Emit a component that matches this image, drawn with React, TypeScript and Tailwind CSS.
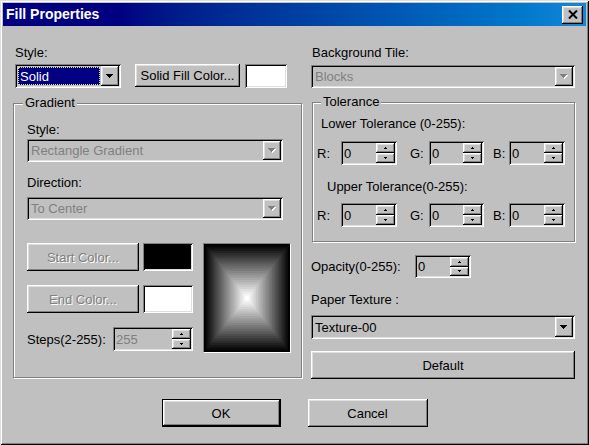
import React from 'react';

// Classic 3D borders
const SUNKEN =
  'shadow-[inset_1px_1px_0_#808080,inset_-1px_-1px_0_#ffffff,inset_2px_2px_0_#000000,inset_-2px_-2px_0_#dfdfdf]';
const RAISED =
  'shadow-[inset_-1px_-1px_0_#000000,inset_1px_1px_0_#ffffff,inset_-2px_-2px_0_#808080,inset_2px_2px_0_#dfdfdf]';
const DISABLED_TEXT = 'text-[#808080] [text-shadow:1px_1px_0_#ffffff]';

const DownArrow = ({ disabled = false }: { disabled?: boolean }) => {
  const rows = (dx: number, dy: number, fill: string) => (
    <g fill={fill}>
      <rect x={0 + dx} y={0 + dy} width="7" height="1" />
      <rect x={1 + dx} y={1 + dy} width="5" height="1" />
      <rect x={2 + dx} y={2 + dy} width="3" height="1" />
      <rect x={3 + dx} y={3 + dy} width="1" height="1" />
    </g>
  );
  return (
    <svg width="8" height="5" viewBox="0 0 8 5" shapeRendering="crispEdges">
      {disabled && rows(1, 1, '#ffffff')}
      {rows(0, 0, disabled ? '#808080' : '#000000')}
    </svg>
  );
};

const TinyArrow = ({ up }: { up?: boolean }) => (
  <svg width="3" height="2" viewBox="0 0 3 2" shapeRendering="crispEdges">
    {up ? (
      <g fill="#000">
        <rect x="1" y="0" width="1" height="1" />
        <rect x="0" y="1" width="3" height="1" />
      </g>
    ) : (
      <g fill="#000">
        <rect x="0" y="0" width="3" height="1" />
        <rect x="1" y="1" width="1" height="1" />
      </g>
    )}
  </svg>
);

interface ComboProps {
  value: string;
  disabled?: boolean;
  selected?: boolean;
  className?: string;
}

const Combo = ({ value, disabled, selected, className = '' }: ComboProps) => (
  <div className={`flex bg-[#c0c0c0] p-[2px] ${SUNKEN} ${className}`}>
    <div className="flex min-w-0 flex-1 items-center">
      {selected ? (
        <span className="m-[1px] flex h-[calc(100%-2px)] flex-1 items-center border border-dotted border-[#e0e080] bg-[#000080] pl-[1px] text-white">
          {value}
        </span>
      ) : (
        <span className={`pl-[2px] ${disabled ? 'text-[#808080]' : 'text-black'}`}>{value}</span>
      )}
    </div>
    <div className={`flex w-[18px] items-center justify-center bg-[#c0c0c0] ${RAISED}`}>
      <DownArrow disabled={disabled} />
    </div>
  </div>
);

const SpinEdit = ({ value, disabled, className = '' }: { value: string; disabled?: boolean; className?: string }) => (
  <div className={`flex bg-[#c0c0c0] p-[2px] ${SUNKEN} ${className}`}>
    <div className={`flex flex-1 items-center pl-[1px] ${disabled ? 'text-[#808080]' : 'text-black'}`}>{value}</div>
    <div className="flex w-[19px] flex-col">
      <div className={`flex flex-1 items-center justify-center ${RAISED}`}>
        <TinyArrow up />
      </div>
      <div className={`flex flex-1 items-center justify-center ${RAISED}`}>
        <TinyArrow />
      </div>
    </div>
  </div>
);

interface BtnProps {
  children: React.ReactNode;
  disabled?: boolean;
  isDefault?: boolean;
  className?: string;
}

const Btn = ({ children, disabled, isDefault, className = '' }: BtnProps) => (
  <button
    type="button"
    className={`flex items-center justify-center bg-[#c0c0c0] ${RAISED} ${
      isDefault ? 'border border-black' : ''
    } ${disabled ? DISABLED_TEXT : 'text-black'} ${className}`}
  >
    {children}
  </button>
);

const GradientPreview = () => {
  const steps = 24;
  const w = 86;
  const h = 108;
  return (
    <div className="h-[110px] w-[88px] border border-[#808080] border-r-white border-b-white">
      <svg width={w} height={h} viewBox={`0 0 ${w} ${h}`} className="block">
        {Array.from({ length: steps }, (_, i) => {
          const x = (i * (w / 2)) / steps;
          const y = (i * (h / 2)) / steps;
          const c = Math.round((i / (steps - 1)) * 255);
          return (
            <rect key={i} x={x} y={y} width={w - 2 * x} height={h - 2 * y} fill={`rgb(${c},${c},${c})`} />
          );
        })}
      </svg>
    </div>
  );
};

export default function App() {
  return (
    <div
      className={`flex h-[445px] w-[589px] flex-col bg-[#c0c0c0] p-[3px] text-[13px] leading-[15px] text-black font-['Liberation_Sans',Arial,sans-serif] shadow-[inset_1px_1px_0_#dfdfdf,inset_-1px_-1px_0_#000000,inset_2px_2px_0_#ffffff,inset_-2px_-2px_0_#808080]`}
    >
      {/* Title bar */}
      <div className="flex h-[23px] items-center bg-linear-to-r from-[#000080] from-20% to-[#1488d8] pr-[3px] pl-[3px]">
        <span className="flex-1 text-[14px] font-bold text-white">Fill Properties</span>
        <div className={`flex h-[18px] w-[21px] items-center justify-center bg-[#c0c0c0] ${RAISED}`}>
          <svg width="10" height="9" viewBox="0 0 10 9">
            <path d="M1 0.5 L9 8.5 M9 0.5 L1 8.5" stroke="#000" strokeWidth="2" />
          </svg>
        </div>
      </div>

      {/* Body */}
      <div className="flex pl-[10px]">
        {/* Left column */}
        <div className="flex w-[289px] flex-col">
          <div className="mt-[19px] pl-[2px]">Style:</div>
          <div className="mt-[4px] flex pl-[2px]">
            <Combo value="Solid" selected className="h-[24px] w-[106px]" />
            <Btn className="ml-[14px] h-[23px] w-[105px]">Solid Fill Color...</Btn>
            <div className={`ml-[5px] h-[24px] w-[42px] bg-white ${SUNKEN}`} />
          </div>

          <fieldset className="mt-[8px] h-[282px] w-[289px] border border-[#808080] shadow-[inset_1px_1px_0_#ffffff,1px_1px_0_#ffffff]">
            <legend className="ml-[9px] bg-[#c0c0c0] px-[2px] leading-[14px]">Gradient</legend>
            <div className="flex flex-col pt-[12px] pl-[13px]">
              <div>Style:</div>
              <Combo value="Rectangle Gradient" disabled className="mt-[2px] h-[23px] w-[256px]" />
              <div className="mt-[13px]">Direction:</div>
              <Combo value="To Center" disabled className="mt-[7px] h-[23px] w-[256px]" />

              <div className="mt-[23px] flex">
                <div className="flex w-[166px] flex-col">
                  <div className="flex">
                    <Btn disabled className="h-[28px] w-[112px]">
                      Start Color...
                    </Btn>
                    <div className={`ml-[4px] h-[28px] w-[50px] bg-black ${SUNKEN}`} />
                  </div>
                  <div className="mt-[14px] flex">
                    <Btn disabled className="h-[28px] w-[112px]">
                      End Color...
                    </Btn>
                    <div className={`ml-[4px] h-[28px] w-[50px] bg-white ${SUNKEN}`} />
                  </div>
                  <div className="mt-[14px] flex items-center">
                    <span className="flex-1">Steps(2-255):</span>
                    <SpinEdit value="255" disabled className="h-[24px] w-[80px]" />
                  </div>
                </div>
                <div className="ml-[10px]">
                  <GradientPreview />
                </div>
              </div>
            </div>
          </fieldset>
        </div>

        {/* Right column */}
        <div className="ml-[9px] flex w-[264px] flex-col">
          <div className="mt-[19px] pl-[1px]">Background Tile:</div>
          <Combo value="Blocks" disabled className="mt-[5px] h-[23px] w-[264px]" />

          <fieldset className="mt-[7px] ml-[1px] h-[147px] w-[263px] border border-[#808080] shadow-[inset_1px_1px_0_#ffffff,1px_1px_0_#ffffff]">
            <legend className="ml-[8px] bg-[#c0c0c0] px-[2px] leading-[14px]">Tolerance</legend>
            <div className="flex flex-col pt-[7px] pl-[4px]">
              <div className="pl-[4px]">Lower Tolerance (0-255):</div>
              <div className="mt-[10px] flex h-[24px] items-center">
                <span className="w-[24px]">R:</span>
                <SpinEdit value="0" className="h-[24px] w-[56px]" />
                <span className="ml-[13px] w-[19px]">G:</span>
                <SpinEdit value="0" className="h-[24px] w-[55px]" />
                <span className="ml-[9px] w-[16px]">B:</span>
                <SpinEdit value="0" className="h-[24px] w-[56px]" />
              </div>
              <div className="mt-[14px] pl-[10px]">Upper Tolerance(0-255):</div>
              <div className="mt-[9px] flex h-[24px] items-center">
                <span className="w-[24px]">R:</span>
                <SpinEdit value="0" className="h-[24px] w-[56px]" />
                <span className="ml-[13px] w-[19px]">G:</span>
                <SpinEdit value="0" className="h-[24px] w-[55px]" />
                <span className="ml-[9px] w-[16px]">B:</span>
                <SpinEdit value="0" className="h-[24px] w-[56px]" />
              </div>
            </div>
          </fieldset>

          <div className="mt-[13px] flex items-center">
            <span className="w-[104px]">Opacity(0-255):</span>
            <SpinEdit value="0" className="h-[23px] w-[56px]" />
          </div>
          <div className="mt-[14px]">Paper Texture :</div>
          <Combo value="Texture-00" className="mt-[8px] h-[24px] w-[264px]" />
          <Btn className="mt-[12px] h-[28px] w-[264px]">Default</Btn>
        </div>
      </div>

      {/* Dialog buttons */}
      <div className="mt-[20px] flex justify-center gap-[27px]">
        <Btn isDefault className="h-[28px] w-[119px]">
          OK
        </Btn>
        <Btn className="h-[28px] w-[120px]">Cancel</Btn>
      </div>
    </div>
  );
}
